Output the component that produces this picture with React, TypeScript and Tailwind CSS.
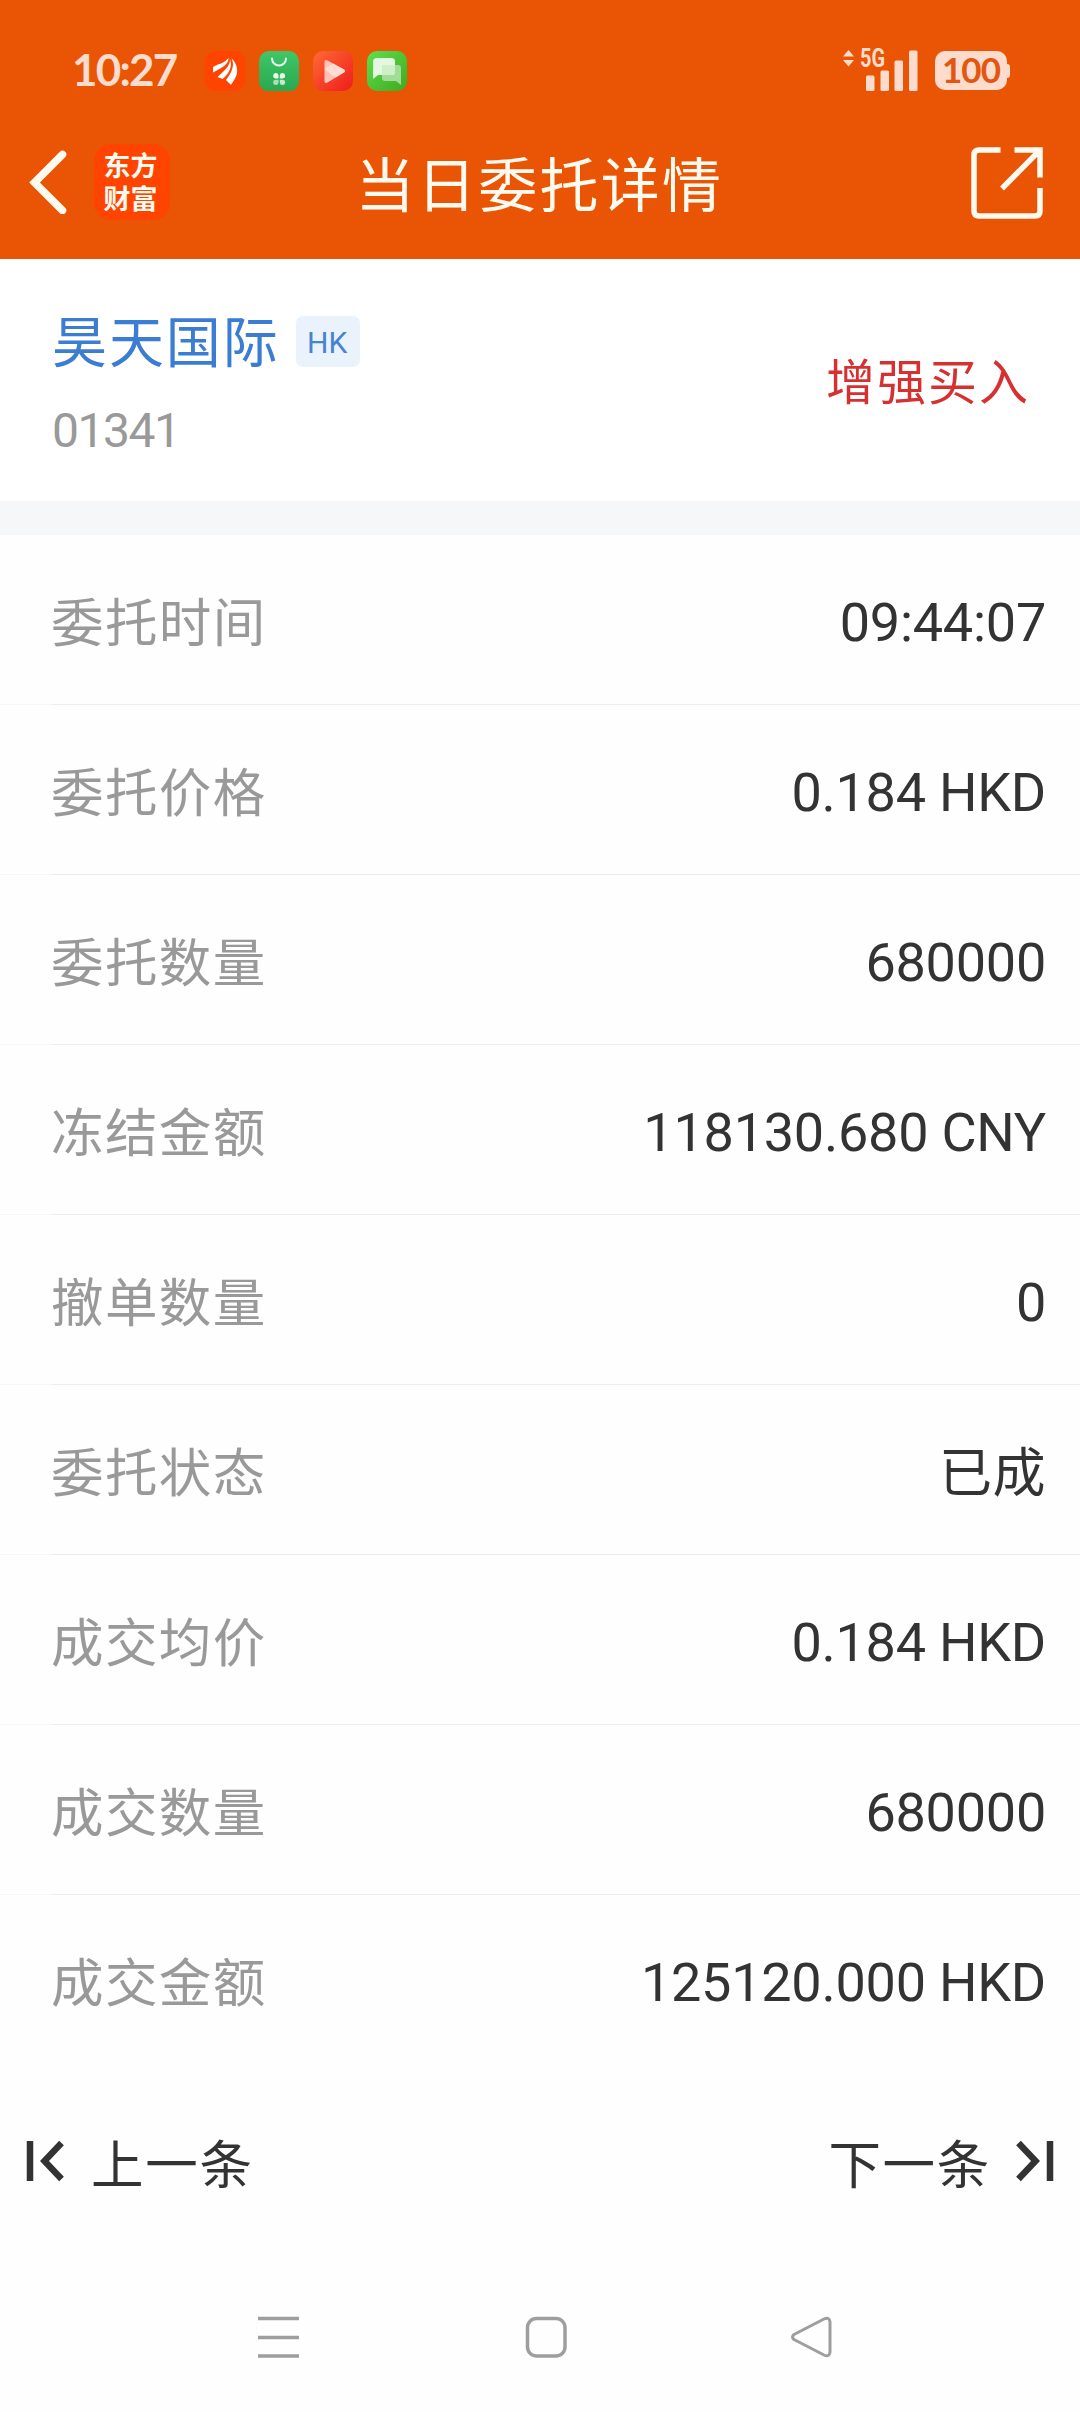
const rows = [
  { label: '委托时间', value: '09:44:07' },
  { label: '委托价格', value: '0.184 HKD' },
  { label: '委托数量', value: '680000' },
  { label: '冻结金额', value: '118130.680 CNY' },
  { label: '撤单数量', value: '0' },
  { label: '委托状态', value: '已成', cjk: true },
  { label: '成交均价', value: '0.184 HKD' },
  { label: '成交数量', value: '680000' },
  { label: '成交金额', value: '125120.000 HKD' },
]

function AppIcons() {
  return (
    <div className="flex items-center gap-[14px]">
      <svg viewBox="0 0 40 40" className="w-10 h-10">
        <rect width="40" height="40" rx="10" fill="#ff4400" />
        <g fill="#fff">
          <path d="M8 16C13 12.500 18 13.500 23.500 7C23.500 14 17 16.500 8 21.500Z" />
          <path d="M24.500 7C26.500 12 22 18 12.500 26L17.500 28C25 22 28 14 24.500 7Z" />
          <path d="M26.500 7.500C30 14 27 21 21 29L26 34C28 30.500 33 25 32 18C31.500 13 29 9.500 26.500 7.500Z" />
        </g>
      </svg>
      <svg viewBox="0 0 40 40" className="w-10 h-10">
        <defs>
          <linearGradient id="store" x1="0" y1="0" x2="0" y2="1">
            <stop offset="0" stopColor="#3fc767" />
            <stop offset="1" stopColor="#2aa750" />
          </linearGradient>
        </defs>
        <rect width="40" height="40.500" rx="10" fill="url(#store)" />
        <path d="M13 7.500A7 7 0 0 0 27 7.500" fill="none" stroke="#e4f9ea" strokeWidth="2" strokeLinecap="round" />
        <path d="M19.500 27.500h-3a2.700 2.700 0 1 1 3-3z" fill="#e4f9ea" />
        <path d="M20.800 27.500h3a2.700 2.700 0 1 0-3-3z" fill="#e4f9ea" />
        <path d="M19.500 28.700h-3a2.700 2.700 0 1 0 3 3z" fill="#a9dfba" />
        <path d="M20.800 28.700h3a2.700 2.700 0 1 1-3 3z" fill="#c5ead0" />
      </svg>
      <svg viewBox="0 0 40 40" className="w-10 h-10">
        <defs>
          <linearGradient id="video" x1="0" y1="0" x2="1" y2="1">
            <stop offset="0" stopColor="#ff6a36" />
            <stop offset="1" stopColor="#ee1c1c" />
          </linearGradient>
        </defs>
        <rect width="40" height="40" rx="10" fill="url(#video)" />
        <path d="M11.500 11Q11.500 8 14.500 9.500L31 18.500Q33 20 31 21.500L14.500 31.500Q11.500 33 11.500 30Z" fill="#ffc4b8" />
        <path d="M11.500 18L20 12.500L31 18.500Q33 20 31 21.500L22.500 26.500Z" fill="#ffdcd3" />
      </svg>
      <svg viewBox="0 0 40 40" className="w-10 h-10">
        <defs>
          <linearGradient id="chat" x1="0" y1="0" x2="1" y2="1">
            <stop offset="0" stopColor="#5fe04d" />
            <stop offset="1" stopColor="#3fa91f" />
          </linearGradient>
        </defs>
        <rect width="40" height="40" rx="10" fill="url(#chat)" />
        <path d="M15 14h16q3 0 3 3v17l-5-4H18q-3 0-3-3z" fill="#a3dc98" />
        <path d="M10 7h14q4 0 4 3v11q0 3-3 3H11l-5 4V11q0-4 4-4z" fill="#e3f9df" />
        <path d="M15 14h13v7q0 3-3 3H15z" fill="#cdf0c6" />
      </svg>
    </div>
  )
}

function StatusBar() {
  return (
    <div className="h-[110px] pt-[31px] pl-[72px] pr-[70px] flex items-center justify-between text-[#fddccd]">
      <div className="flex items-center">
        <span className="w-[133px] pb-[3px] font-['Lato'] font-bold text-[44px] leading-none tracking-[-1.8px]">10:27</span>
        <AppIcons />
      </div>
      <div className="flex items-center">
        <svg viewBox="0 0 51 42" className="w-[51px] h-[42px] overflow-visible" fill="currentColor">
          <path d="M0 6.500L5.500 0L11 6.500ZM0 10H11L5.500 16.500Z" />
          <text
            x="17"
            y="17"
            textLength="25"
            lengthAdjust="spacingAndGlyphs"
            className="font-['Roboto'] font-bold text-[25px]"
          >
            5G
          </text>
          <rect x="23" y="25.500" width="8.500" height="15.500" rx="1.500" />
          <rect x="37.500" y="20.500" width="8.500" height="20.500" rx="1.500" />
          <rect x="51.500" y="10.500" width="8.500" height="30.500" rx="1.500" />
          <rect x="66" y="0.500" width="8.500" height="40.500" rx="1.500" />
        </svg>
        <div className="ml-[41px] flex items-center">
          <div className="w-[72px] h-[39px] rounded-[10px] bg-[#fddccd] flex items-center justify-center">
            <span className="pb-[3px] font-['Lato'] font-bold text-[35px] leading-none tracking-[-1px] text-[#e2560f]">100</span>
          </div>
          <div className="w-[3px] h-[14px] rounded-r-sm bg-[#fddccd]" />
        </div>
      </div>
    </div>
  )
}

function TitleBar() {
  return (
    <div className="h-[149px] pl-[29px] pr-[36px] flex items-start justify-between text-[#fffaf0]">
      <div className="w-[300px] pt-[34px] flex items-center">
        <svg viewBox="0 0 40 64" className="w-10 h-16" fill="none" stroke="currentColor" strokeWidth="7.500" strokeLinecap="round">
          <path d="M33.500 4.500L5.500 32.500L33.500 60.500" />
        </svg>
        <div className="ml-[25px] w-[76px] h-[76px] pr-[3px] pb-[2px] rounded-[17px] bg-[#ff4400] flex items-center justify-center">
          <span className="font-['Noto_Sans_CJK_SC'] font-bold text-[27px] leading-[33px] text-center">
            东方
            <br />
            财富
          </span>
        </div>
      </div>
      <h1 className="pt-[30px] pl-[6px] font-['Noto_Sans_CJK_SC'] text-[59px] leading-[84px] tracking-[2.300px]">当日委托详情</h1>
      <div className="w-[300px] pt-[36px] flex justify-end">
        <svg viewBox="0 0 74 74" className="w-[74px] h-[74px]" fill="none" stroke="currentColor" strokeWidth="5.500">
          <path d="M30.500 4H9Q4 4 4 9V65Q4 70 9 70H65Q70 70 70 65V42" />
          <path d="M44.500 4H70V31.500M70 4L32 42.500" />
        </svg>
      </div>
    </div>
  )
}

function Stock() {
  return (
    <section className="h-[242px] pl-[52px] pr-[50px] flex justify-between bg-white">
      <div className="pt-[37px]">
        <div className="flex items-center">
          <span className="font-['Noto_Sans_CJK_SC'] text-[55px] leading-[84px] tracking-[1.9px] text-[#3b7dd2]">昊天国际</span>
          <span className="ml-[16px] mt-[6px] pt-[3px] pr-px w-[64px] h-[51px] rounded-[7px] bg-[#eaf2fc] flex items-center justify-center font-['Roboto'] text-[30px] leading-none text-[#4683d0]">
            HK
          </span>
        </div>
        <div className="mt-[23px] font-['Roboto'] text-[48px] leading-[56px] tracking-[-1.500px] text-[#999]">01341</div>
      </div>
      <span className="pt-[84px] font-['Noto_Sans_CJK_SC'] text-[49px] leading-[72px] tracking-[2px] text-[#d63031]">增强买入</span>
    </section>
  )
}

function StepIcon({ flip = false }: { flip?: boolean }) {
  return (
    <svg
      viewBox="0 0 38 42"
      className={flip ? 'w-[38px] h-[42px] -scale-x-100' : 'w-[38px] h-[42px]'}
      fill="none"
      stroke="#333"
      strokeWidth="6.500"
    >
      <path d="M4 1V41M35.500 3L18.500 21L35.500 39" />
    </svg>
  )
}

export default function App() {
  return (
    <div className="w-[1080px] h-[2412px] flex flex-col bg-[#fefefe] overflow-hidden">
      <header className="h-[259px] bg-[#e95504]">
        <StatusBar />
        <TitleBar />
      </header>

      <Stock />
      <div className="h-[34px] bg-[#f6f7f9]" />

      <ul>
        {rows.map((r, i) => (
          <li key={r.label} className="h-[170px] flex flex-col">
            <div className="flex-1 pl-[51px] pr-[34px] flex items-center justify-between">
              <span className="font-['Noto_Sans_CJK_SC'] text-[52.500px] tracking-[1.400px] text-[#999]">{r.label}</span>
              {r.cjk ? (
                <span className="font-['Noto_Sans_CJK_SC'] text-[53px] tracking-[0.500px] text-[#333]">{r.value}</span>
              ) : (
                <span className="pt-[5px] font-['Roboto'] text-[54px] tracking-[-0.250px] text-[#333]">{r.value}</span>
              )}
            </div>
            <div className={i < rows.length - 1 ? 'h-px flex' : 'h-px flex invisible'}>
              <div className="w-[51px] bg-[#f7f7f7]" />
              <div className="flex-1 bg-[#ededed]" />
            </div>
          </li>
        ))}
      </ul>

      {/* prev / next order */}
      <div className="h-[192px] px-[26px] flex items-center justify-between font-['Noto_Sans_CJK_SC'] text-[52.500px] text-[#333]">
        <div className="flex items-center">
          <StepIcon />
          <span className="ml-[27px] pt-px tracking-[1.700px]">上一条</span>
        </div>
        <div className="flex items-center">
          <span className="mr-[25px] pt-px tracking-[1.700px]">下一条</span>
          <StepIcon flip />
        </div>
      </div>

      {/* system navigation */}
      <nav className="flex-1 pl-[258px] pr-[247px] pt-[59px] flex items-start justify-between">
        <svg viewBox="0 0 42 42" className="w-[42px] h-[42px]" stroke="#9e9e9e" strokeWidth="3.500">
          <path d="M0 2.500H41M0 21.500H41M0 40H41" />
        </svg>
        <svg viewBox="0 0 42 42" className="w-[42px] h-[42px]" fill="none" stroke="#9e9e9e" strokeWidth="3.500">
          <rect x="2.500" y="2.500" width="37.500" height="37.500" rx="9" />
        </svg>
        <svg viewBox="0 0 42 42" className="w-[42px] h-[42px]" fill="none" stroke="#9e9e9e" strokeWidth="3" strokeLinejoin="round">
          <path d="M3 18.500L33 3Q38.500 0.500 39 6V36Q38.500 41.500 33 39L3 23.500Q0 21 3 18.500Z" />
        </svg>
      </nav>
    </div>
  )
}
